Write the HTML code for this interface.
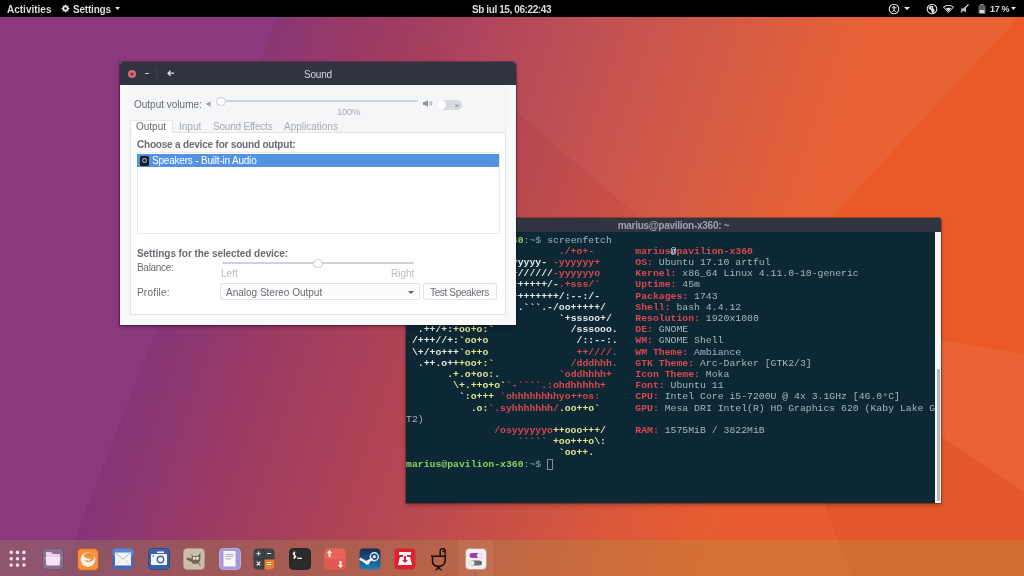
<!DOCTYPE html>
<html><head><meta charset="utf-8">
<style>
*{box-sizing:border-box;margin:0;padding:0}
html,body{width:1024px;height:576px;overflow:hidden;background:#b04a5a}
body{position:relative;font-family:"Liberation Sans",sans-serif;font-size:10px}
#top,#snd,#term{will-change:transform}
.abs{position:absolute}
#wall{position:absolute;left:0;top:0;width:1024px;height:576px}
#top{position:absolute;left:0;top:0;width:1024px;height:17px;background:#000;color:#dcdcdc;font-weight:bold}
#top .t{position:absolute;top:3.5px;line-height:11px;white-space:nowrap}
/* sound window */
#snd{position:absolute;left:120px;top:62px;width:396px;height:263px;background:#f5f6f7;border-radius:3px 3px 0 0;box-shadow:0 0 0 1px rgba(40,10,40,.35),0 2px 4px rgba(0,0,0,.3);overflow:hidden}
#snd .tb{position:absolute;left:0;top:0;width:396px;height:23px;background:#2f3440}
#snd .lbl{position:absolute;color:#686c74;white-space:nowrap;line-height:11px}
#snd .b{font-weight:bold}
/* terminal */
#term{position:absolute;left:406px;top:218px;width:535px;height:285px;background:#0c2834;border-radius:3px 3px 0 0;box-shadow:0 0 0 1px rgba(40,10,10,.3),0 2px 4px rgba(0,0,0,.3);overflow:hidden}
#term .tb{position:absolute;left:0;top:0;width:535px;height:14px;background:#2f343f;color:#9da2aa;font-weight:bold;font-size:10px;line-height:15px;text-align:center;letter-spacing:-0.27px}
#term pre{position:absolute;left:0;top:16.6px;font-family:"Liberation Mono",monospace;font-size:9.8px;line-height:11.2px;color:#a6b6ba}
#term b{font-weight:bold}
#term .r{color:#d9474f}
#term .w{color:#e8e8e8}
#term .y{color:#e3e490}
#term .g{color:#8cd068}
#term .p{color:#92a6ae;font-weight:normal}
#term .c{outline:1px solid #7d8f96;outline-offset:-1px}
#term .sb{position:absolute;left:529px;top:14px;width:6px;height:271px;background:#f5f5f3}
#dock{position:absolute;left:0;top:540px;width:1024px;height:36px;background:rgba(158,170,66,.25)}
</style></head>
<body>
<svg id="wall" width="1024" height="576" viewBox="0 0 1024 576">
<defs><linearGradient id="gA" gradientUnits="userSpaceOnUse" x1="235" y1="78" x2="802" y2="266"><stop offset="0.000" stop-color="rgb(133,53,119)"/><stop offset="0.180" stop-color="rgb(154,58,100)"/><stop offset="0.400" stop-color="rgb(175,67,86)"/><stop offset="0.580" stop-color="rgb(191,76,76)"/><stop offset="0.840" stop-color="rgb(220,88,58)"/><stop offset="1.000" stop-color="rgb(232,93,48)"/></linearGradient><linearGradient id="gB" gradientUnits="userSpaceOnUse" x1="235" y1="78" x2="802" y2="266"><stop offset="0.000" stop-color="rgb(133,53,119)"/><stop offset="0.160" stop-color="rgb(150,56,105)"/><stop offset="0.415" stop-color="rgb(180,72,90)"/><stop offset="0.585" stop-color="rgb(196,82,80)"/><stop offset="0.776" stop-color="rgb(213,91,68)"/><stop offset="1.000" stop-color="rgb(233,98,52)"/></linearGradient></defs>
<rect width="1024" height="576" fill="url(#gB)"/>
<polygon points="0,0 385,0 746,308 852,576 0,576" fill="url(#gA)"/>
<polygon points="0,0 284.5,0 60.6,576 0,576" fill="rgb(138,57,124)"/>
<polygon points="1035,0 1100,0 1100,367 746,308" fill="rgb(234,89,40)"/>
<polygon points="746,308 1100,367 1100,542" fill="rgb(233,99,52)"/>
<polygon points="746,308 1100,542 1100,576 852,576" fill="rgb(227,87,43)"/>
</svg>

<div id="top">
<div class="t" style="left:7px">Activities</div>
<svg class="abs" style="left:61px;top:4px" width="9" height="9" viewBox="0 0 9 9"><g fill="#e6e6e6"><circle cx="4.5" cy="4.5" r="3"/><path d="M4.5 0L5.4 2H3.6ZM4.5 9L5.4 7H3.6ZM0 4.5L2 5.4V3.6ZM9 4.5L7 5.4V3.6ZM1.3 1.3L3.3 2.3L2.3 3.3ZM7.7 7.7L5.7 6.7L6.7 5.7ZM7.7 1.3L6.7 3.3L5.7 2.3ZM1.3 7.7L2.3 5.7L3.3 6.7Z"/></g><circle cx="4.5" cy="4.5" r="1.3" fill="#000"/></svg>
<div class="t" style="left:73px;letter-spacing:-0.2px">Settings</div>
<svg class="abs" style="left:115px;top:7px" width="5" height="3" viewBox="0 0 5 3"><path d="M0 0H5L2.5 3Z" fill="#e6e6e6"/></svg>
<div class="t" style="left:472px;letter-spacing:-0.4px">Sb iul 15, 06:22:43</div>
<svg class="abs" style="left:888px;top:3px" width="12" height="12" viewBox="0 0 12 12"><circle cx="6" cy="6" r="4.8" stroke="#dedede" stroke-width="1.1" fill="none"/><circle cx="6" cy="3.6" r="0.9" fill="#dedede"/><path d="M3.5 4.8H8.5M6 4.8V7M6 7L4.3 9M6 7L7.7 9" stroke="#dedede" stroke-width="1" fill="none"/></svg>
<svg class="abs" style="left:904px;top:7px" width="6" height="3" viewBox="0 0 6 3"><path d="M0 0H6L3 3Z" fill="#e6e6e6"/></svg>
<svg class="abs" style="left:926px;top:3px" width="12" height="12" viewBox="0 0 12 12"><circle cx="6" cy="6" r="4.8" stroke="#dedede" stroke-width="1.1" fill="none"/><path d="M2.6 4.2L4.8 2.4L7.4 3.2L7 5.3L8.6 6.8L8.2 9.4L6.2 10.2L5.5 8.2L4.4 6.6L2.8 6.2Z" fill="#dedede"/><path d="M4.6 4.2L6 4.6L5.6 5.8Z" fill="#000"/></svg>
<svg class="abs" style="left:943px;top:5px" width="11" height="8" viewBox="0 0 11 8"><path d="M0.5 2Q5.5 -1.5 10.5 2L5.5 7.5Z" stroke="#dedede" stroke-width="1" fill="none"/><path d="M2.8 3.6Q5.5 2 8.2 3.6L5.5 6.6Z" fill="#dedede"/></svg>
<svg class="abs" style="left:960px;top:4px" width="9" height="9" viewBox="0 0 9 9"><path d="M8.5 0.5L0.8 8.3" stroke="#dedede" stroke-width="1.1"/><path d="M1 4.5H3L6 2V8.5L3 6.5H1Z" fill="#bdbdbd"/></svg>
<svg class="abs" style="left:978px;top:4px" width="8" height="10" viewBox="0 0 8 10"><rect x="2.5" y="0" width="3" height="1" fill="#9a9a9a"/><rect x="0.5" y="1" width="7" height="9" rx="0.8" fill="#5e5e5e"/><rect x="1.5" y="6" width="5" height="3" fill="#d8d8d8"/></svg>
<div class="t" style="left:990px;font-size:9px;letter-spacing:-0.3px">17 %</div>
<svg class="abs" style="left:1011px;top:7px" width="5" height="3" viewBox="0 0 5 3"><path d="M0 0H5L2.5 3Z" fill="#e6e6e6"/></svg>
</div>

<div id="term">
<div class="tb">marius@pavilion-x360: ~</div>
<pre><b class="g">marius@pavilion-x360</b><b class="p">:~$ </b>screenfetch
<b class="r">                          ./+o+-</b>       <b class="r">marius</b><b class="w">@</b><b class="r">pavilion-x360</b>
<b class="w">                  yyyyy- </b><b class="r">-yyyyyy+</b>      <b class="r">OS:</b> Ubuntu 17.10 artful
<b class="w">               ://+//////</b><b class="r">-yyyyyyo</b>      <b class="r">Kernel:</b> x86_64 Linux 4.11.0-10-generic
<b class="y">           .++ </b><b class="w">.:/++++++/-</b><b class="r">.+sss/`</b>      <b class="r">Uptime:</b> 45m
<b class="y">         .:++o:  </b><b class="w">/++++++++/:--:/-</b>      <b class="r">Packages:</b> 1743
<b class="y">        o:+o+:++.</b><b class="w">`..```.-/oo+++++/</b>     <b class="r">Shell:</b> bash 4.4.12
<b class="y">       .:+o:+o/.</b><b class="w">          `+sssoo+/</b>    <b class="r">Resolution:</b> 1920x1080
<b class="w">  .++/+:</b><b class="y">+oo+o:`</b><b class="w">             /sssooo.</b>   <b class="r">DE:</b> GNOME
<b class="w"> /+++//+:</b><b class="y">`oo+o</b><b class="w">               /::--:.</b>   <b class="r">WM:</b> GNOME Shell
<b class="w"> \+/+o+++</b><b class="y">`o++o</b><b class="r">               ++////.</b>   <b class="r">WM Theme:</b> Ambiance
<b class="w">  .++.o+</b><b class="y">++oo+:`</b><b class="r">             /dddhhh.</b>   <b class="r">GTK Theme:</b> Arc-Darker [GTK2/3]
<b class="y">       .+.o+oo:.</b><b class="r">          `oddhhhh+</b>    <b class="r">Icon Theme:</b> Moka
<b class="y">        \+.++o+o`</b><b class="r">`-````.:ohdhhhhh+</b>     <b class="r">Font:</b> Ubuntu 11
<b class="y">         `:o+++ </b><b class="r">`ohhhhhhhhyo++os:</b>      <b class="r">CPU:</b> Intel Core i5-7200U @ 4x 3.1GHz [46.0°C]
<b class="y">           .o:</b><b class="r">`.syhhhhhhh/</b><b class="y">.oo++o`</b>      <b class="r">GPU:</b> Mesa DRI Intel(R) HD Graphics 620 (Kaby Lake G
T2)
<b class="r">               /osyyyyyyo</b><b class="y">++ooo+++/</b>     <b class="r">RAM:</b> 1575MiB / 3822MiB
<b class="r">                   ````` </b><b class="y">+oo+++o\:</b>
<b class="y">                          `oo++.</b>
<b class="g">marius@pavilion-x360</b><b class="p">:~$ </b><b class="c"> </b>
</pre>
<div class="sb"></div><div class="abs" style="left:530.5px;top:151px;width:3.5px;height:132px;background:#b9b9b9;border-radius:1px"></div>
</div>

<div id="snd">
<div class="tb">
<div class="abs" style="left:7.6px;top:7.6px;width:8.2px;height:8.2px;border-radius:50%;background:#d06d76"></div>
<svg class="abs" style="left:9.7px;top:9.7px" width="4" height="4" viewBox="0 0 4 4"><circle cx="2" cy="2" r="1.6" fill="#a3202e"/></svg>
<div class="abs" style="left:25px;top:10.6px;width:4.2px;height:1.5px;background:#c0c4cc"></div>
<div class="abs" style="left:36px;top:6.7px;width:2px;height:10px;background:#383c48"></div>
<svg class="abs" style="left:46.5px;top:8.4px" width="7" height="6.4" viewBox="0 0 7 6.4"><path d="M7 3.2H1.2M3.6 0.6L1 3.2L3.6 5.8" stroke="#dfe2e8" stroke-width="1.3" fill="none"/></svg>
<div class="abs" style="left:184px;top:6.5px;color:#d3d6dc;font-size:10px;line-height:11px;letter-spacing:-0.2px">Sound</div>
</div>
<div class="abs" style="left:1px;top:23px;width:6.5px;height:240px;background:#f9fafa"></div><div class="abs" style="left:1px;top:253px;width:394px;height:10px;background:#f9fafa"></div><div class="abs" style="left:387px;top:23px;width:8px;height:240px;background:#f8f9fa"></div>
<div class="lbl" style="left:14px;top:37px">Output volume:</div>
<svg class="abs" style="left:86px;top:38.5px" width="6" height="6" viewBox="0 0 6 6"><path d="M0.5 2H2L4.5 0.3V5.7L2 4H0.5Z" fill="#9a9da3"/></svg>
<div class="abs" style="left:100px;top:38px;width:198px;height:2px;background:#cdd2dc;border-radius:1px"></div>
<div class="abs" style="left:96px;top:34.5px;width:9.5px;height:9.5px;border-radius:50%;background:#fff;border:1px solid #c6cad1"></div>
<div class="lbl" style="left:217px;top:43.5px;color:#a9acb2;font-size:9.5px;letter-spacing:-0.3px">100%</div>
<svg class="abs" style="left:303px;top:38px" width="10" height="7" viewBox="0 0 10 7"><path d="M0 2H2L5 0V7L2 5H0Z" fill="#8f9298"/><path d="M6.5 2Q7.5 3.5 6.5 5M8 1Q9.8 3.5 8 6" stroke="#9a9da3" stroke-width="0.9" fill="none"/></svg>
<div class="abs" style="left:316px;top:37.5px;width:25.5px;height:10px;border-radius:5px;background:#d6dae2"></div>
<div class="abs" style="left:316px;top:37.5px;width:10px;height:10px;border-radius:50%;background:#fff;box-shadow:0 0 1px #c0c4cc"></div>
<div class="abs" style="left:334.5px;top:38.5px;color:#7f838b;font-size:8px;line-height:9px">&#215;</div>
<!-- tabs -->
<div class="abs" style="left:10px;top:70px;width:376px;height:183px;background:#fff;border:1px solid #e0e3e6"></div>
<div class="abs" style="left:10px;top:58px;width:43px;height:13px;background:#fff;border:1px solid #e6e8eb;border-bottom:none"></div>
<div class="lbl" style="left:16px;top:59px">Output</div>
<div class="lbl" style="left:59px;top:59px;color:#a9acb2">Input</div>
<div class="lbl" style="left:93px;top:59px;color:#a9acb2;letter-spacing:-0.2px">Sound Effects</div>
<div class="lbl" style="left:164px;top:59px;color:#a9acb2">Applications</div>
<div class="lbl b" style="left:17px;top:77.3px;letter-spacing:-0.2px">Choose a device for sound output:</div>
<div class="abs" style="left:17px;top:90px;width:363px;height:82px;background:#fff;border:1px solid #e8eaed"></div>
<div class="abs" style="left:17px;top:91.5px;width:362px;height:13.5px;background:#5294e2"></div>
<div class="abs" style="left:20px;top:93.5px;width:9px;height:10px;background:#1d1f24;border-radius:1px"></div>
<div class="abs" style="left:22px;top:96px;width:5px;height:5px;border-radius:50%;border:1px solid #c4c4c4"></div>
<div class="lbl" style="left:32px;top:93px;color:#fff;letter-spacing:-0.2px">Speakers - Built-in Audio</div>
<div class="lbl b" style="left:17px;top:186px;letter-spacing:-0.07px">Settings for the selected device:</div>
<div class="lbl" style="left:17px;top:200px;letter-spacing:-0.3px">Balance:</div>
<div class="abs" style="left:102px;top:200px;width:192px;height:2px;background:#cdd2dc;border-radius:1px"></div>
<div class="abs" style="left:193px;top:196.5px;width:9.5px;height:9.5px;border-radius:50%;background:#fff;border:1px solid #c6cad1"></div>
<div class="lbl" style="left:101px;top:206px;color:#b8bbc0">Left</div>
<div class="lbl" style="left:271px;top:206px;color:#b8bbc0">Right</div>
<div class="lbl" style="left:17px;top:225px;letter-spacing:0.2px">Profile:</div>
<div class="abs" style="left:100px;top:221px;width:200px;height:17px;background:#fcfcfc;border:1px solid #dfe2e6;border-radius:2px"></div>
<div class="lbl" style="left:106px;top:225px">Analog Stereo Output</div>
<div class="abs" style="left:288px;top:229px;width:0;height:0;border-left:3px solid transparent;border-right:3px solid transparent;border-top:3px solid #5c616c"></div>
<div class="abs" style="left:303px;top:221px;width:73.5px;height:17px;background:#fcfcfc;border:1px solid #dfe2e6;border-radius:2px"></div>
<div class="lbl" style="left:310px;top:225px;letter-spacing:-0.35px">Test Speakers</div>
</div>

<div id="dock">
<div class="abs" style="left:458px;top:0;width:35px;height:36px;background:rgba(255,255,255,.06)"></div>
</div>
<svg class="abs" style="left:0;top:0" width="1024" height="576"><circle cx="11.2" cy="552.4" r="1.8" fill="#f6dcef"/><circle cx="11.2" cy="558.8" r="1.8" fill="#f6dcef"/><circle cx="11.2" cy="565.1" r="1.8" fill="#f6dcef"/><circle cx="17.5" cy="552.4" r="1.8" fill="#f6dcef"/><circle cx="17.5" cy="558.8" r="1.8" fill="#f6dcef"/><circle cx="17.5" cy="565.1" r="1.8" fill="#f6dcef"/><circle cx="23.9" cy="552.4" r="1.8" fill="#f6dcef"/><circle cx="23.9" cy="558.8" r="1.8" fill="#f6dcef"/><circle cx="23.9" cy="565.1" r="1.8" fill="#f6dcef"/></svg>
<svg class="abs" style="left:42px;top:548px" width="22" height="22" viewBox="0 0 22 22"><rect x="0.5" y="0.5" width="21" height="21" rx="4" fill="#8e6e8e"/><rect x="0.5" y="0.5" width="21" height="21" rx="4" fill="none" stroke="#6e5470" stroke-width="1"/><path d="M4 4H9L11 6H18V9H4Z" fill="#e8d0e8"/><path d="M3.5 9H18.5L17.5 17.5H4.5Z" fill="#f8e4f8"/></svg>
<svg class="abs" style="left:77px;top:548px" width="22" height="23" viewBox="0 0 22 23"><rect x="0.6" y="0.6" width="20.8" height="21.8" rx="4" fill="#f3923e" stroke="#b8582a" stroke-width="1"/><circle cx="10.9" cy="11.6" r="7.3" fill="#fcf2e4"/><path d="M6.5 8Q8 4.5 12 4.6Q16.5 5 17.6 9.5Q17 12.5 14.5 12.8Q13.2 10.2 10.5 10.4Q8.5 10.5 6.5 8Z" fill="#f0963e"/><path d="M8.5 12.6Q11.2 14.8 14.8 12.2" stroke="#b86a3a" stroke-width="1" fill="none"/><path d="M11 7.5Q13 6.5 15 8" stroke="#d87a30" stroke-width="0.8" fill="none"/></svg>
<svg class="abs" style="left:112px;top:548px" width="22" height="22" viewBox="0 0 22 22"><rect x="0.5" y="0.5" width="21" height="21" rx="4" fill="#4568b4"/><rect x="0.5" y="0.5" width="21" height="8" rx="4" fill="#5b86cc"/><rect x="3" y="4.5" width="16" height="13" fill="#f2f4f8"/><path d="M3 4.5L11 11L19 4.5" stroke="#b8c4a8" stroke-width="1" fill="none"/><path d="M3 17.5L9 11.5M19 17.5L13 11.5" stroke="#d0d4d8" stroke-width="0.8"/></svg>
<svg class="abs" style="left:148px;top:548px" width="22" height="22" viewBox="0 0 22 22"><rect x="0.5" y="0.5" width="21" height="21" rx="4" fill="#3c5fa9"/><rect x="0.5" y="0.5" width="21" height="21" rx="4" fill="none" stroke="#2c4a8a" stroke-width="1"/><rect x="9" y="3.5" width="7" height="1.5" fill="#f4f6fa"/><rect x="3" y="6" width="16" height="11" rx="0.8" fill="#f4f6fa"/><circle cx="12.5" cy="11.5" r="3.2" fill="none" stroke="#3c5fa9" stroke-width="1.4"/><rect x="4.5" y="7.5" width="1.5" height="1.2" fill="#3c5fa9"/></svg>
<svg class="abs" style="left:183px;top:548px" width="22" height="22" viewBox="0 0 22 22"><rect x="0.5" y="0.5" width="21" height="21" rx="4" fill="#cdbca9"/><rect x="0.5" y="0.5" width="21" height="21" rx="4" fill="none" stroke="#b8a494" stroke-width="0.6"/><path d="M8.7 5.8L9.8 8H15L17.6 4.3L17.3 11Q17 14.5 15 15.5L11 16Q9 15.5 8.7 14L3.5 11.5L4 9.5L8.7 10.5Z" fill="#6e6455"/><rect x="9.9" y="8.9" width="2.6" height="2.8" fill="#ece4d8"/><rect x="13.1" y="8.9" width="2.6" height="2.8" fill="#ece4d8"/><path d="M15.5 15L17.5 17.5" stroke="#6e6455" stroke-width="1.1"/></svg>
<svg class="abs" style="left:219px;top:548px" width="22" height="22" viewBox="0 0 22 22"><rect x="0.5" y="0.5" width="21" height="21" rx="4" fill="#a699d8"/><rect x="0.5" y="0.5" width="21" height="21" rx="4" fill="none" stroke="#b8acec" stroke-width="1"/><rect x="4.5" y="3" width="12" height="15.5" fill="#f8f8fc"/><path d="M6.5 6.3H14.5M6.5 8.3H14.5M6.5 10.8H12" stroke="#a0a0b0" stroke-width="0.9"/></svg>
<svg class="abs" style="left:253px;top:548px" width="22" height="22" viewBox="0 0 22 22"><rect x="0.5" y="0.5" width="21" height="21" rx="4" fill="#3f4446"/><path d="M11 11H21.5V17.5Q21.5 21.5 17.5 21.5H11Z" fill="#ee7d2e"/><path d="M11 0.5V21.5M0.5 11H21.5" stroke="#2c3032" stroke-width="0.8"/><path d="M3.5 5.5H7.5M5.5 3.5V7.5M14 5.5H18M3.7 13.7L7.3 17.3M7.3 13.7L3.7 17.3M14 14.5H18M14 16.5H18" stroke="#f2f2f2" stroke-width="1.2"/></svg>
<svg class="abs" style="left:289px;top:548px" width="22" height="22" viewBox="0 0 22 22"><rect x="0.5" y="0.5" width="21" height="21" rx="4" fill="#2b2b2b"/><rect x="0.5" y="0.5" width="21" height="21" rx="4" fill="none" stroke="#1c1c1c" stroke-width="0.8"/><path d="M6.3 4.5Q4 4.3 4.2 5.8Q4.4 7 5.5 7.2Q6.8 7.5 6.8 8.6Q6.8 10 4.2 9.8M5.5 3.5V11" stroke="#ececec" stroke-width="1.1" fill="none"/><rect x="8.3" y="9.6" width="4.6" height="1.4" fill="#ececec"/></svg>
<svg class="abs" style="left:324px;top:548px" width="22" height="22" viewBox="0 0 22 22"><rect x="0.5" y="0.5" width="21" height="21" rx="4" fill="#e8645a"/><rect x="0.5" y="11" width="21" height="10.5" rx="0" fill="#e05a50"/><path d="M5.5 2L8 5H6.5V9H4.5V5H3Z" fill="#fff6f0"/><path d="M16.5 20L19 17H17.5V13H15.5V17H14Z" fill="#fff6f0"/></svg>
<svg class="abs" style="left:359px;top:548px" width="22" height="23" viewBox="0 0 22 23"><defs><linearGradient id="st" x1="0" y1="0" x2="0" y2="1"><stop offset="0" stop-color="#16294f"/><stop offset="1" stop-color="#1e80b8"/></linearGradient></defs><rect x="0.5" y="0.5" width="21" height="21" rx="4" fill="url(#st)"/><circle cx="15.3" cy="8.7" r="4" fill="none" stroke="#dfe8f0" stroke-width="1.4"/><circle cx="15.3" cy="8.7" r="1.6" fill="#dfe8f0"/><path d="M0.8 10.6L7.6 14.6L13.5 10.5" stroke="#eef2f6" stroke-width="2.6" fill="none"/><circle cx="8.3" cy="14.6" r="2.2" fill="#eef2f6"/></svg>
<svg class="abs" style="left:394px;top:548px" width="22" height="22" viewBox="0 0 22 22"><rect x="0.5" y="0.5" width="21" height="21" rx="4" fill="#dc2230"/><path d="M5 4H17V7H13V9H16L18 17H4L6 9H9V7H5Z" fill="#fff"/><path d="M10 8H12V12H14L11 15L8 12H10Z" fill="#dc2230"/></svg>
<svg class="abs" style="left:430px;top:548px" width="22" height="23" viewBox="0 0 22 23"><path d="M10.2 8.2V3.2Q10.2 0.6 12.8 0.6Q15.2 0.6 15.2 3.2V8.2" stroke="#140e0e" stroke-width="1.5" fill="none"/><path d="M15.2 5.2L20.5 6.2L15.2 7.2Z" fill="#b84a2a"/><path d="M1 8.2H16" stroke="#140e0e" stroke-width="1.5"/><path d="M2.5 8.2V13Q2.5 18.3 8.5 18.3Q15.2 18.3 15.2 12V8.2" stroke="#140e0e" stroke-width="1.5" fill="none"/><path d="M6.5 18.3L11.5 22.3M10.8 18.3L5.5 22.3" stroke="#140e0e" stroke-width="1.1"/><circle cx="13.2" cy="3.2" r="0.9" fill="#140e0e"/></svg>
<svg class="abs" style="left:465px;top:548px" width="22" height="22" viewBox="0 0 22 22"><rect x="0.5" y="0.5" width="21" height="21" rx="4" fill="#f6efee"/><rect x="0.5" y="0.5" width="21" height="21" rx="4" fill="none" stroke="#c09080" stroke-width="0.8"/><rect x="4.5" y="5" width="12.5" height="5" rx="2.5" fill="#a540a8"/><circle cx="14.5" cy="7.5" r="2.5" fill="#f4e8f4"/><rect x="4.5" y="12.5" width="12.5" height="5" rx="2.5" fill="#6a6e72"/><circle cx="7" cy="15" r="2.5" fill="#e8e8ec"/></svg>
<div class="abs" style="left:86.5px;top:572px;width:2.5px;height:2.5px;border-radius:50%;background:#4a5fa8"></div>
<div class="abs" style="left:297.5px;top:572px;width:2.5px;height:2.5px;border-radius:50%;background:#6a6aa0"></div>
<div class="abs" style="left:473.5px;top:572px;width:2.5px;height:2.5px;border-radius:50%;background:#6a6aa0"></div>
</body></html>
